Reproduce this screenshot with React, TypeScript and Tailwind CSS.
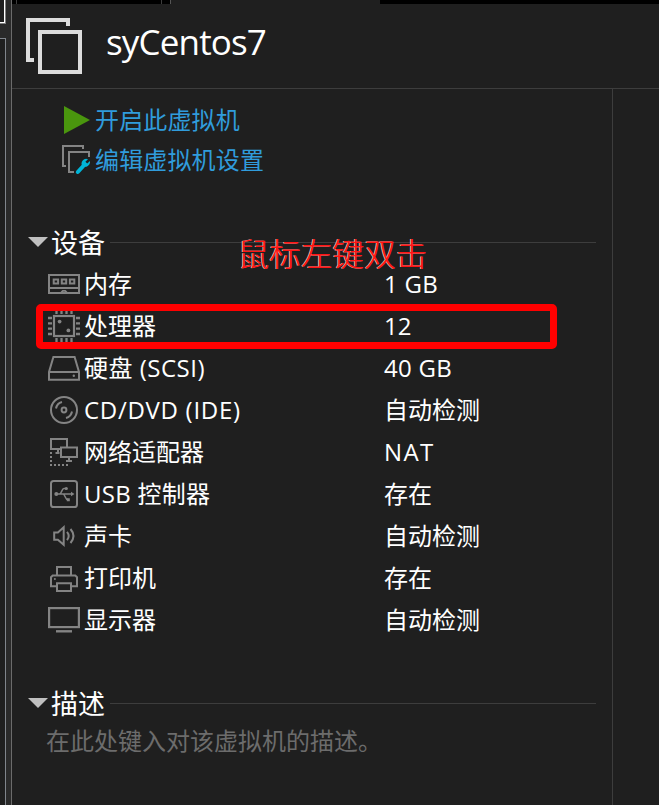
import type { ReactNode } from 'react';

function Icon({ children }: { children: ReactNode }) {
  return (
    <svg width="32" height="32" viewBox="0 0 32 32" fill="none" stroke="#848484" strokeWidth="2" className="shrink-0">
      {children}
    </svg>
  );
}

const MemoryIcon = () => (
  <Icon>
    <rect x="1" y="7" width="30" height="18" />
    <path d="M1 20H31" />
    <path d="M5.7 11.5h4.4v4h-4.4zM13.8 11.5h4.4v4h-4.4zM21.9 11.5h4.4v4h-4.4z" />
    <path d="M13.6 25v-1l1.2-1.2h2.4l1.2 1.2v1" strokeWidth="1.8" />
  </Icon>
);

const CpuIcon = () => (
  <Icon>
    <rect x="6" y="6" width="20" height="20" strokeWidth="2.2" />
    <path d="M0 8h4M0 13.3h4M0 18.6h4M0 24h4M28 8h4M28 13.3h4M28 18.6h4M28 24h4M8.5 0v4M13.5 0v4M18.5 0v4M23.5 0v4M8.5 28v4M13.5 28v4M18.5 28v4M23.5 28v4" strokeWidth="2.3" />
    <circle cx="11.6" cy="11.6" r="1.9" fill="#848484" stroke="none" />
    <circle cx="20.4" cy="20.4" r="1.9" fill="#848484" stroke="none" />
  </Icon>
);

const DiskIcon = () => (
  <Icon>
    <path d="M5.4 5H26.6L31 20V27.7H1V20ZM1 20H31" />
    <circle cx="25.8" cy="23.7" r="1.2" fill="#848484" stroke="none" />
  </Icon>
);

const DiscIcon = () => (
  <Icon>
    <circle cx="16" cy="16" r="13" />
    <circle cx="16" cy="16" r="2.4" />
    <path d="M8 14.5A8.2 8.2 0 0 1 14 8M18 24A8.2 8.2 0 0 0 24 17.5" />
  </Icon>
);

const NetworkIcon = () => (
  <Icon>
    <path d="M12.2 13H3V3H19v7.5M13 11.5H29V21H13Z" />
    <path d="M10 13v3M7.5 17h4M21 21v3M18 25h6" />
    <path d="M3 16v14M6 29h15" strokeDasharray="2 2" />
  </Icon>
);

const UsbIcon = () => (
  <Icon>
    <rect x="3" y="3" width="26" height="26" rx="2.6" />
    <path d="M8 16H24M11.5 16C13.5 16 13.8 10.5 16 10.5H18M15 16C17 16 17.3 21.6 19.5 21.6H20" strokeWidth="1.5" />
    <circle cx="8.3" cy="16" r="2" fill="#848484" stroke="none" />
    <circle cx="18.3" cy="10.5" r="1.6" fill="#848484" stroke="none" />
    <path d="M18.8 20.2h3v3h-3zM23 13.7L26.5 16L23 18.3z" fill="#848484" stroke="none" />
  </Icon>
);

const SoundIcon = () => (
  <Icon>
    <path d="M6.2 12.5h3.7l5.8-5.3v17.6L9.9 19.8H6.2z" />
    <path d="M19 11.8q3.4 4.2 0 8.4M22.5 9q6 7 0 14" />
  </Icon>
);

const PrinterIcon = () => (
  <Icon>
    <path d="M9 13V5H23V13M8 24.3H3V15.2L4.7 13.5H27.3L29 15.2V24.3H24M9 21.3H23V29H9Z" />
    <circle cx="6.9" cy="17" r="1" fill="#848484" stroke="none" />
  </Icon>
);

const DisplayIcon = () => (
  <Icon>
    <rect x="1.1" y="4.1" width="29.8" height="19" strokeWidth="2.2" />
    <path d="M8 27.3H24" strokeWidth="2.4" />
  </Icon>
);

const devices = [
  { name: '内存', value: '1 GB', icon: <MemoryIcon />, valueTracking: 'tracking-[0.3px]' },
  { name: '处理器', value: '12', icon: <CpuIcon />, marked: true },
  { name: '硬盘 (SCSI)', value: '40 GB', icon: <DiskIcon />, nameTracking: 'tracking-[0.5px]', valueTracking: 'tracking-[0.3px]' },
  { name: 'CD/DVD (IDE)', value: '自动检测', icon: <DiscIcon />, nameTracking: 'tracking-[0.7px]' },
  { name: '网络适配器', value: 'NAT', icon: <NetworkIcon />, valueTracking: 'tracking-[1.4px]' },
  { name: 'USB 控制器', value: '存在', icon: <UsbIcon />, nameTracking: 'tracking-[0.25px]' },
  { name: '声卡', value: '自动检测', icon: <SoundIcon /> },
  { name: '打印机', value: '存在', icon: <PrinterIcon /> },
  { name: '显示器', value: '自动检测', icon: <DisplayIcon /> },
];

function SectionTitle({ children }: { children: ReactNode }) {
  return (
    <div className="ml-4 mr-4 flex h-10 items-center">
      <svg width="20" height="10" viewBox="0 0 20 10" className="shrink-0">
        <path d="M0 0H20L10 10Z" fill="#c0c0c0" />
      </svg>
      <h2 className="ml-[3px] w-[59px] shrink-0 pt-0.5 text-[27px] leading-9 whitespace-nowrap">{children}</h2>
      <div className="h-px flex-1 bg-[#3d3d3d]" />
    </div>
  );
}

export default function App() {
  return (
    <div className="flex h-[805px] w-[659px] overflow-hidden bg-[#1f1f1f] font-['Open_Sans','Noto_Sans_CJK_SC',sans-serif] text-2xl font-normal text-white">
      <aside className="flex w-3 shrink-0 flex-col border-r border-[#6b6b6b] bg-[#2a2a2a]">
        <div className="h-6 w-1.5 border-r border-b border-[#808080] bg-[#1f1f1f]">
          <div className="h-[23px] border-r border-b border-white" />
        </div>
        <div className="mt-3.5 w-1.5 flex-1 border-t border-r border-[#80858c] bg-[#1f1f1f]" />
      </aside>
      <div className="flex min-w-0 flex-1 flex-col">
        <div className="flex h-1 bg-black">
          <div className="ml-1 w-px bg-[#3d3d3d]" />
          <div className="ml-[144px] w-px bg-[#3d3d3d]" />
          <div className="ml-2 w-[210px] border-l border-[#555] bg-[#1f1f1f]" />
        </div>
        <header className="flex h-[85px] shrink-0 items-center border-b border-[#3d3d3d] pl-3.5">
          <svg width="56" height="56" viewBox="0 0 56 56" fill="none" stroke="#dcdcdc" strokeWidth="4">
            <path d="M42 8V2H2V42H8" />
            <rect x="14" y="14" width="40" height="40" />
          </svg>
          <h1 className="ml-6 pb-2 text-[35px] leading-[48px] tracking-[-0.85px]">syCentos7</h1>
        </header>
        <main className="flex min-h-0 flex-1">
          <div className="flex w-[601px] shrink-0 flex-col border-r border-[#3d3d3d]">
            <nav className="mt-[11px] flex flex-col pl-[50px] tracking-[0.15px] text-[#309cdc]">
              <a className="flex h-10 items-center">
                <svg width="28" height="28" viewBox="0 0 28 28">
                  <path d="M2 0L28 14L2 28Z" fill="#4a960e" />
                </svg>
                <span className="ml-[5px] pb-px">开启此虚拟机</span>
              </a>
              <a className="flex h-10 items-center">
                <svg width="28" height="30" viewBox="0 0 28 30" fill="none" stroke="#848484" strokeWidth="2">
                  <path d="M21 4V1H1V21H4M12 27H7V7H27V12" />
                  <path d="M15.8 27L22.2 20" stroke="#00b5d8" strokeWidth="4" strokeLinecap="round" />
                  <path d="M26 14.2L23.4 16.8L25.2 18.6L28 16A5 5 0 0 1 20.4 21A4.6 4.6 0 0 1 26 14.2Z" fill="#00b5d8" stroke="none" />
                </svg>
                <span className="ml-[5px] pb-px">编辑虚拟机设置</span>
              </a>
            </nav>
            <section className="relative mt-[42px]">
              <SectionTitle>设备</SectionTitle>
              <ul className="mt-[1px] flex flex-col">
                {devices.map((d) => (
                  <li key={d.name} className="relative flex h-[42px] items-center pl-9 whitespace-nowrap">
                    {d.icon}
                    <span className={`ml-1 w-[300px] ${d.nameTracking ?? ''}`}>{d.name}</span>
                    <span className={d.valueTracking}>{d.value}</span>
                    {d.marked && <div className="absolute top-[-1px] left-6 h-[45px] w-[521px] rounded-[5px] border-[7px] border-[#ff0000]" />}
                  </li>
                ))}
              </ul>
              <div className="absolute top-[18px] left-[226px] text-[31.6px] leading-[28px] font-light whitespace-nowrap text-[#ff1414] [text-shadow:-1px_0_0_#ffb4b4]">
                鼠标左键双击
              </div>
            </section>
            <section className="mt-[42px]">
              <SectionTitle>描述</SectionTitle>
              <p className="ml-[34px] leading-9 text-[#6c6c6c]">在此处键入对该虚拟机的描述。</p>
            </section>
          </div>
        </main>
      </div>
    </div>
  );
}
